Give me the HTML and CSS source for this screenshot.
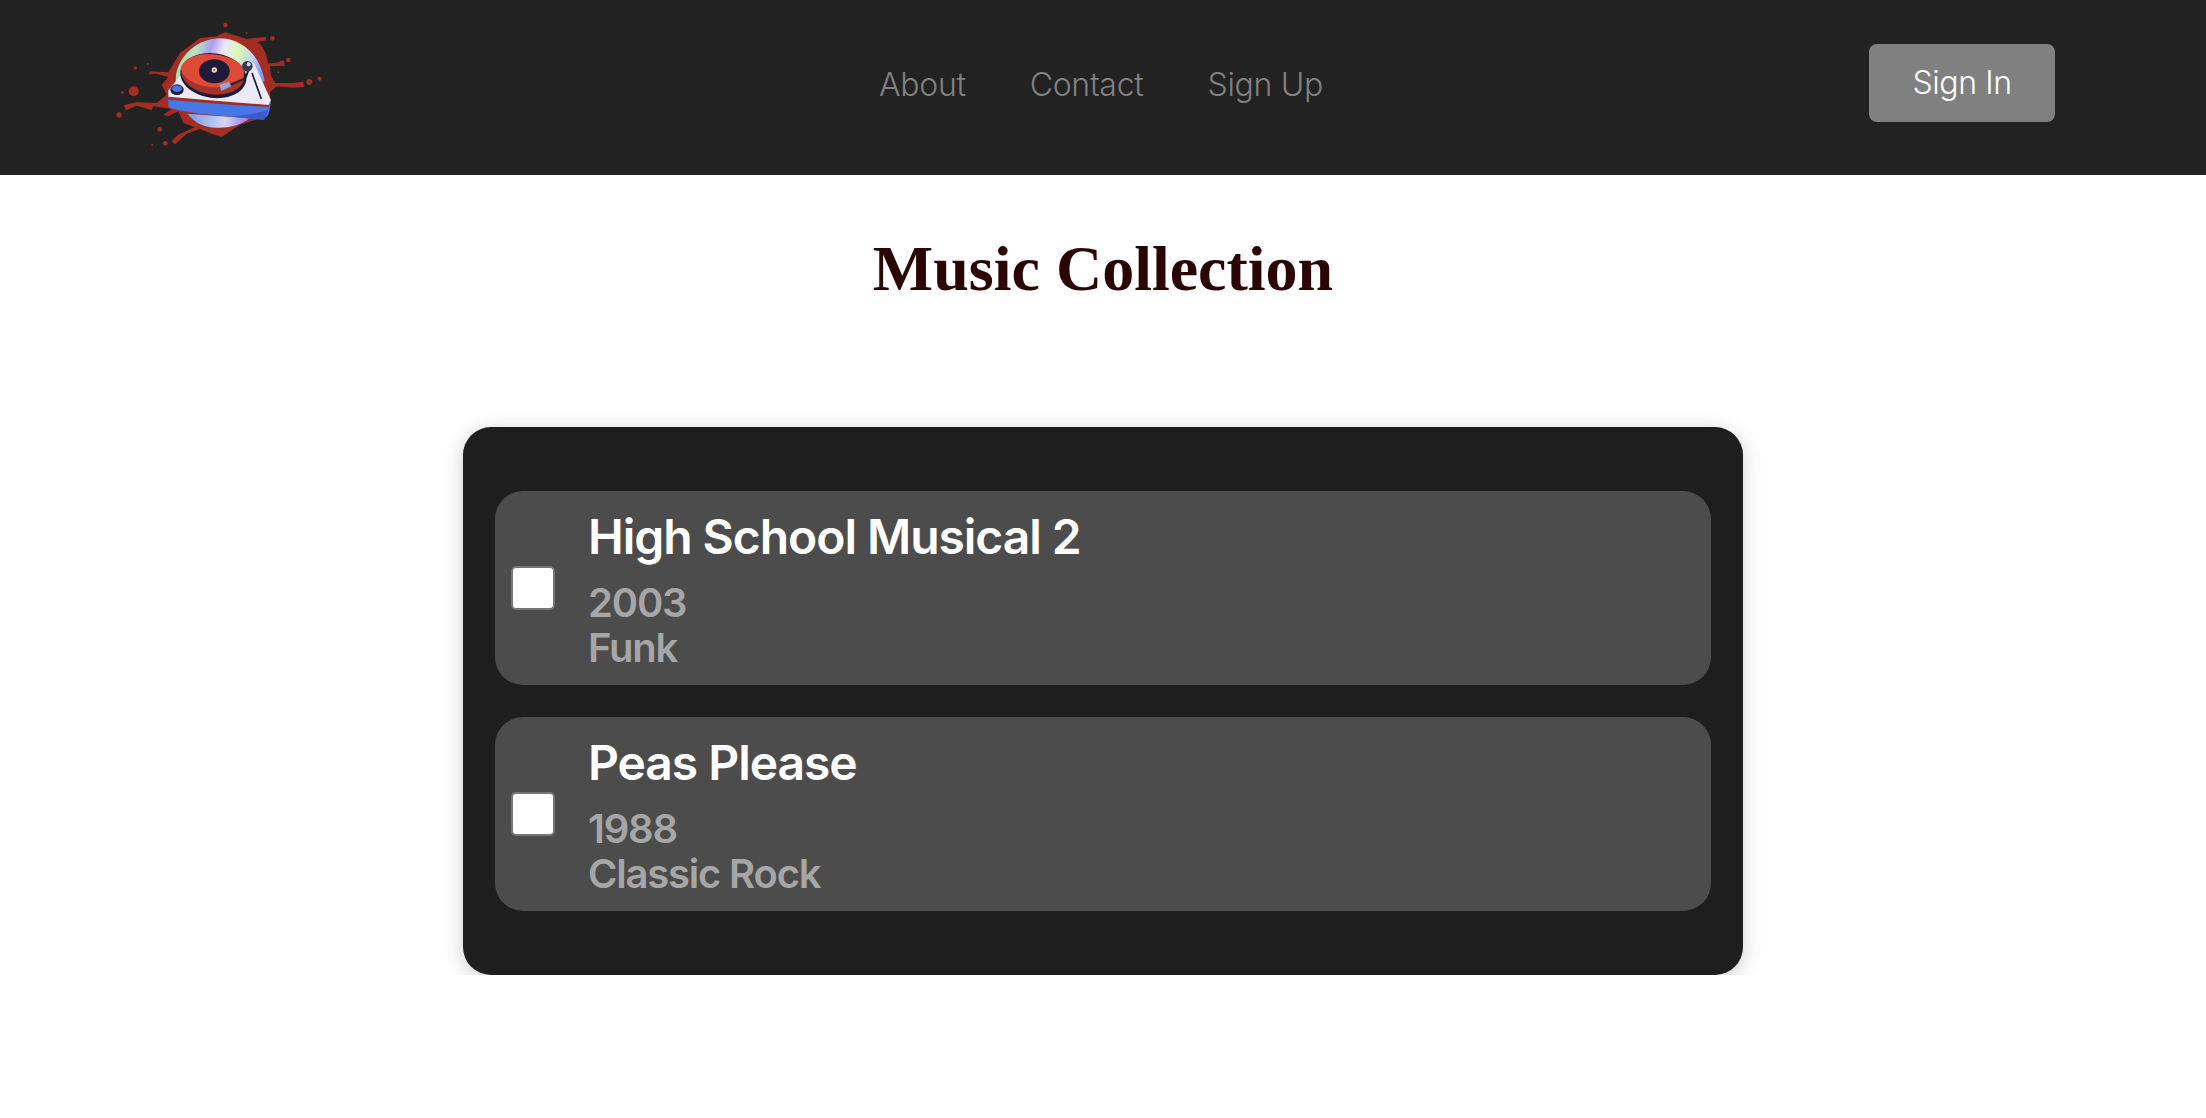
FILE: index.html
```html
<!DOCTYPE html>
<html>
    <head>
        <title>Music Collection</title>
        <link rel="stylesheet" href="styles.css">
    </head>
    <body>
        <header class="navbar">
            <a class="logo" href="#">
                <svg width="240" height="170" viewBox="0 0 720 510">
                    <defs>
                        <linearGradient id="disc" x1="0" y1="0.3" x2="1" y2="0.5">
                            <stop offset="0" stop-color="#8fdc9c"/>
                            <stop offset="0.2" stop-color="#b9e6c0"/>
                            <stop offset="0.36" stop-color="#a99cf0"/>
                            <stop offset="0.5" stop-color="#ece9f8"/>
                            <stop offset="0.68" stop-color="#dcf6b4"/>
                            <stop offset="0.85" stop-color="#bcd0f5"/>
                            <stop offset="1" stop-color="#7d9cf0"/>
                        </linearGradient>
                        <linearGradient id="discLow" x1="0" y1="0" x2="1" y2="0">
                            <stop offset="0" stop-color="#6f9be8"/>
                            <stop offset="0.6" stop-color="#d8d4f5"/>
                            <stop offset="1" stop-color="#8a78ea"/>
                        </linearGradient>
                    </defs>
                    <!-- splatter -->
                    <g fill="#a32c23">
                        <path d="M375 88 L410 98 L440 108 L465 104 L498 102 L498 112 L470 118 L482 124 L497 150 L505 182 L535 178 L550 172 L555 188 L510 190 L512 215 L525 240 L575 240 L610 236 L612 252 L580 254 L530 250 L510 268 L512 300 L500 335 L470 350 L420 365 L365 402 L335 392 L300 378 L260 392 L225 424 L214 414 L235 395 L285 372 L250 360 L235 325 L205 340 L190 335 L215 318 L160 310 L155 322 L110 308 L78 322 L72 306 L110 298 L170 300 L200 275 L185 245 L205 222 L170 212 L147 214 L150 205 L205 208 L240 150 L300 105 L350 100 Z"/>
                        <circle cx="101" cy="265" r="15"/>
                        <circle cx="57" cy="336" r="8"/>
                        <circle cx="179" cy="379" r="7"/>
                        <circle cx="196" cy="421" r="7"/>
                        <circle cx="376" cy="66" r="7"/>
                        <circle cx="517" cy="106" r="7"/>
                        <circle cx="565" cy="171" r="7"/>
                        <circle cx="628" cy="237" r="9"/>
                        <circle cx="659" cy="227" r="6"/>
                        <circle cx="106" cy="195" r="5"/>
                        <circle cx="67" cy="268" r="4"/>
                        <circle cx="143" cy="183" r="3"/>
                        <circle cx="157" cy="425" r="3"/>
                        <circle cx="440" cy="90" r="3"/>
                        <circle cx="535" cy="208" r="3"/>
                    </g>
                    <!-- disc behind the deck -->
                    <path d="M228 215 C240 150 300 106 360 106 C430 108 482 160 494 235 L226 260 Z" fill="url(#disc)"/>
                    <path d="M262 332 L450 346 C420 368 385 376 345 374 C305 372 280 355 262 332 Z" fill="url(#discLow)"/>
                    <!-- deck -->
                    <path d="M205 285 L205 312 C225 322 260 325 300 332 L490 350 L505 335 L513 298 Z" fill="#4a77e6"/>
                    <path d="M400 340 C430 338 470 330 505 322 L492 350 L420 344 Z" fill="#3a5bc8"/>
                    <path d="M205 262 L243 215 L440 190 L462 180 L513 292 L505 307 L400 302 L205 284 Z" fill="#eceaf6"/>
                    <path d="M205 281 L400 298 L508 306 L506 312 L400 306 L205 290 Z" fill="#a32c23"/>
                    <path d="M456 210 L484 288" stroke="#1d1a33" stroke-width="5" fill="none"/>
                    <!-- platter -->
                    <ellipse cx="340" cy="218" rx="100" ry="67" transform="rotate(8 340 218)" fill="#1d1a33"/>
                    <ellipse cx="338" cy="214" rx="95" ry="60" transform="rotate(8 338 214)" fill="#a8322a"/>
                    <ellipse cx="338" cy="203" rx="95" ry="49" transform="rotate(5 338 203)" fill="#dd4a38"/>
                    <ellipse cx="343" cy="205" rx="46" ry="36" fill="#1f1a3a"/>
                    <circle cx="343" cy="201" r="8" fill="#e8dcd8"/>
                    <circle cx="343" cy="201" r="3" fill="#b0362c"/>
                    <!-- tone arm -->
                    <path d="M375 252 L436 226 L448 195" stroke="#1d1a33" stroke-width="6" fill="none"/>
                    <path d="M358 245 L386 236 L394 250 L364 264 Z" fill="#9aa4d0"/>
                    <circle cx="442" cy="190" r="16" fill="#3a3a50"/>
                    <circle cx="446" cy="184" r="6" fill="#d8d8e4"/>
                    <!-- knob -->
                    <ellipse cx="231" cy="260" rx="20" ry="16" fill="#1d1a33"/>
                    <ellipse cx="231" cy="257" rx="15" ry="10" fill="#4a77e6"/>
                </svg>
            </a>
            <nav class="nav-links">
                <a href="#">About</a>
                <a href="#">Contact</a>
                <a href="#">Sign Up</a>
            </nav>
            <div class="nav-action">
                <button type="button" class="sign-in">Sign In</button>
            </div>
        </header>

        <main class="content">
            <h1 class="page-title">Music Collection</h1>
            <section class="album-list">
                <div class="album">
                    <input type="checkbox" class="album-check">
                    <div class="album-info">
                        <h2>High School Musical 2</h2>
                        <p>2003</p>
                        <p>Funk</p>
                    </div>
                </div>
                <div class="album">
                    <input type="checkbox" class="album-check">
                    <div class="album-info">
                        <h2>Peas Please</h2>
                        <p>1988</p>
                        <p>Classic Rock</p>
                    </div>
                </div>
            </section>
        </main>
    </body>
</html>
```

FILE: styles.css
```css
* {
    box-sizing: border-box;
}

body {
    margin: 0;
    background-color: white;
    font-family: Inter, "Noto Sans", sans-serif;
}

/* NAVBAR */
.navbar {
    display: grid;
    grid-template-columns: 1fr auto 1fr;
    align-items: center;
    height: 175px;
    padding: 0 104px 0 100px;
    background-color: #222222;
}

.logo {
    display: flex;
}

.nav-links {
    display: flex;
    gap: 64px;
    margin-top: -6px;
}

.nav-links a {
    color: #808080;
    font-size: 32px;
    font-weight: 300;
    letter-spacing: -0.3px;
    text-decoration: none;
}

.nav-action {
    display: flex;
    justify-content: flex-end;
    padding-right: 47px;
}

.sign-in {
    width: 186px;
    height: 78px;
    margin-top: -10px;
    border: none;
    border-radius: 8px;
    background-color: #808080;
    color: white;
    font-family: inherit;
    font-size: 32px;
    font-weight: 300;
    letter-spacing: -0.4px;
}

/* ALBUMS */
.content {
    display: flex;
    flex-flow: column;
    align-items: center;
}

.page-title {
    margin: 57px 0 121px;
    color: #2b0504;
    font-family: "Liberation Serif", serif;
    font-size: 64px;
    line-height: 74px;
}

.album-list {
    display: flex;
    flex-flow: column;
    gap: 32px;
    width: 1280px;
    padding: 64px 32px;
    border-radius: 28px;
    background-color: #1e1e1e;
    box-shadow: 0 4px 20px rgba(0, 0, 0, 0.2);
}

.album {
    display: flex;
    align-items: center;
    height: 194px;
    padding: 0 16px;
    border-radius: 28px;
    background-color: #4c4c4c;
}

.album-check {
    appearance: none;
    flex: none;
    width: 44px;
    height: 44px;
    margin: 0 33px 0 0;
    border: 2px solid #767676;
    border-radius: 5px;
    background-color: white;
}

.album-info h2 {
    margin: 3px 0 15px;
    color: white;
    font-size: 48px;
    font-weight: 600;
    letter-spacing: -1.05px;
    line-height: 56px;
}

.album-info p {
    margin: 0;
    color: #a6a6a6;
    font-size: 40px;
    font-weight: 600;
    letter-spacing: -1.2px;
    line-height: 45px;
}
```
